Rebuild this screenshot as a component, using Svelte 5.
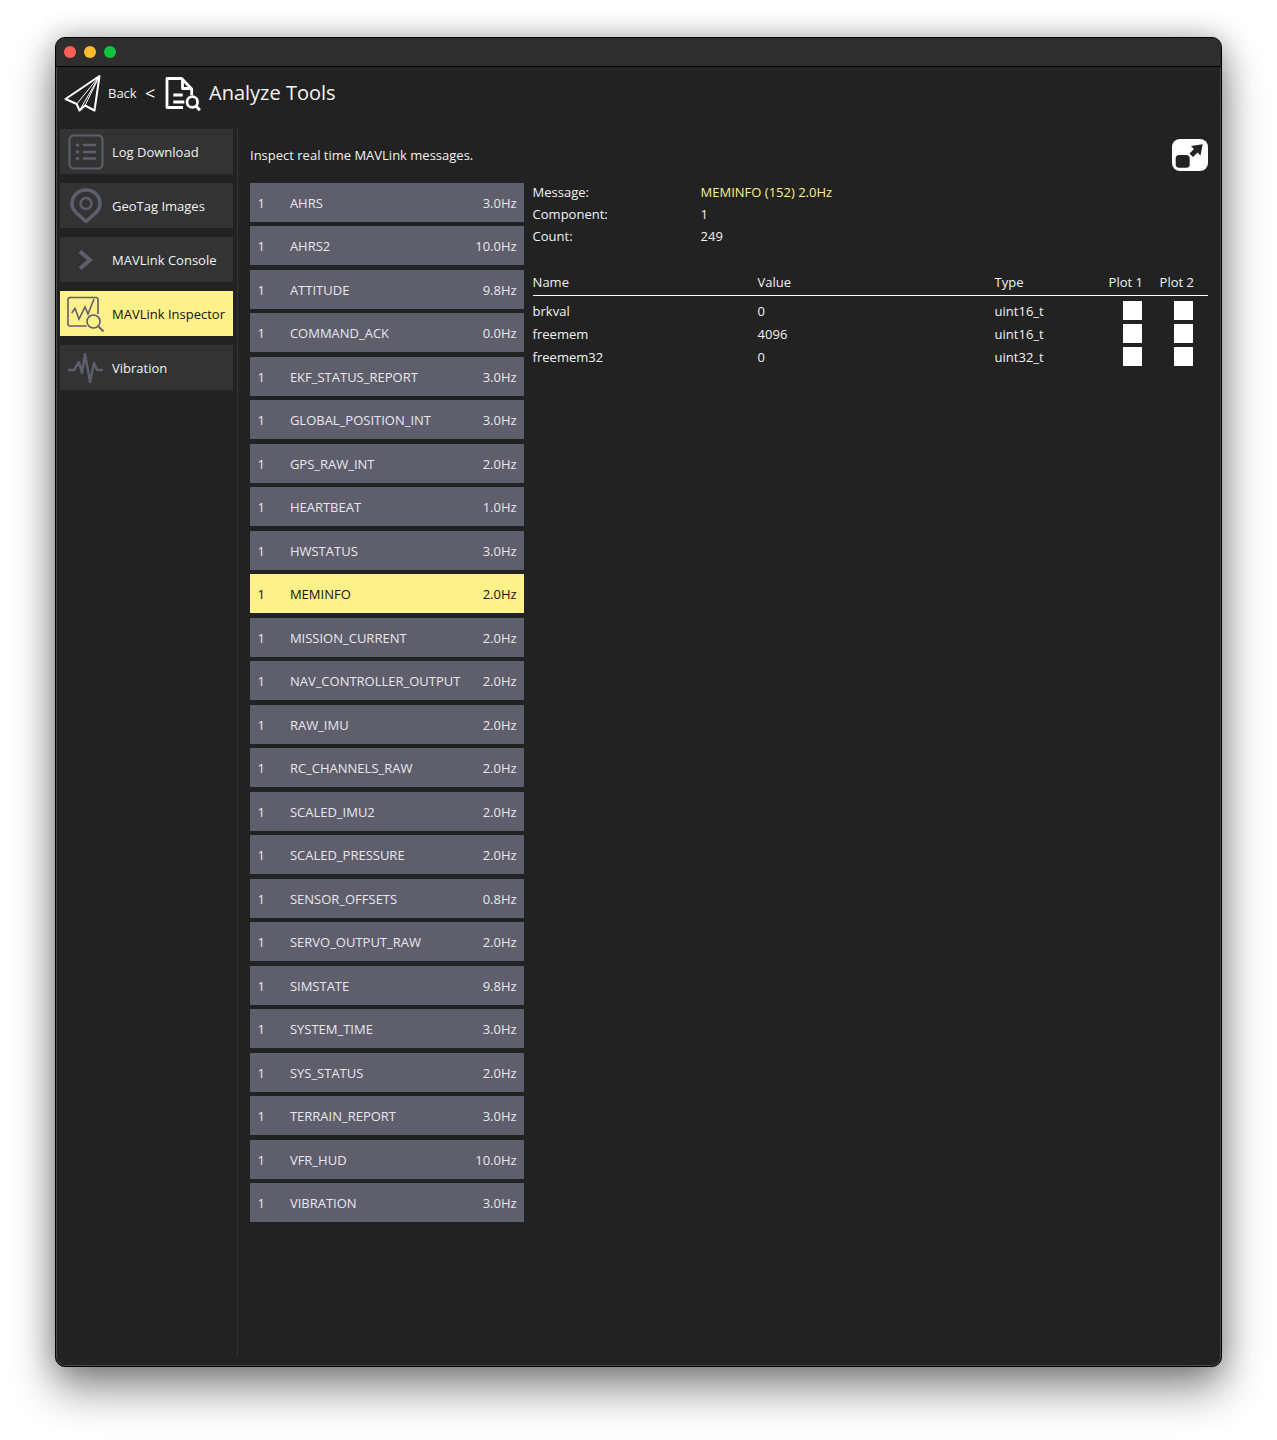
<script>
	const tools = [
		{ name: 'Log Download', icon: 'list' },
		{ name: 'GeoTag Images', icon: 'pin' },
		{ name: 'MAVLink Console', icon: 'chevron' },
		{ name: 'MAVLink Inspector', icon: 'inspect', active: true },
		{ name: 'Vibration', icon: 'wave' }
	];

	const messages = [
		['AHRS', '3.0Hz'],
		['AHRS2', '10.0Hz'],
		['ATTITUDE', '9.8Hz'],
		['COMMAND_ACK', '0.0Hz'],
		['EKF_STATUS_REPORT', '3.0Hz'],
		['GLOBAL_POSITION_INT', '3.0Hz'],
		['GPS_RAW_INT', '2.0Hz'],
		['HEARTBEAT', '1.0Hz'],
		['HWSTATUS', '3.0Hz'],
		['MEMINFO', '2.0Hz'],
		['MISSION_CURRENT', '2.0Hz'],
		['NAV_CONTROLLER_OUTPUT', '2.0Hz'],
		['RAW_IMU', '2.0Hz'],
		['RC_CHANNELS_RAW', '2.0Hz'],
		['SCALED_IMU2', '2.0Hz'],
		['SCALED_PRESSURE', '2.0Hz'],
		['SENSOR_OFFSETS', '0.8Hz'],
		['SERVO_OUTPUT_RAW', '2.0Hz'],
		['SIMSTATE', '9.8Hz'],
		['SYSTEM_TIME', '3.0Hz'],
		['SYS_STATUS', '2.0Hz'],
		['TERRAIN_REPORT', '3.0Hz'],
		['VFR_HUD', '10.0Hz'],
		['VIBRATION', '3.0Hz']
	];

	const fields = [
		['brkval', '0', 'uint16_t'],
		['freemem', '4096', 'uint16_t'],
		['freemem32', '0', 'uint32_t']
	];
</script>

<div class="window">
	<div class="titlebar">
		<span class="dot red"></span>
		<span class="dot yellow"></span>
		<span class="dot green"></span>
	</div>

	<header class="toolbar">
		<svg class="plane" viewBox="0 0 38 38" width="38" height="38" fill="none" stroke="#fff" stroke-width="2" stroke-linejoin="round">
			<path d="M35.500 1 1.500 24 12.700 29 15.500 35.500 21 30.500 30.500 35.500z" />
			<path d="M35.500 1 12.700 29M35.500 1 15.500 35.500M35.500 1 21 30.500" stroke-width="1" />
		</svg>
		<span class="back">Back</span>
		<span class="chevron">&lt;</span>
		<svg class="doc" viewBox="0 0 36 36" width="36" height="36" fill="none" stroke="#fff" stroke-width="2.800">
			<path d="M18 31.500H2V2.500h14.700l10 10.500v6" stroke-linejoin="round" />
			<path d="M17.500 3v9.500h8" stroke-linejoin="round" />
			<path d="M8.300 19h9.400M8.300 26h11" />
			<circle cx="27.300" cy="26" r="5.300" />
			<path d="M31 30l3.800 4.300" stroke-width="3" />
		</svg>
		<span class="heading">Analyze Tools</span>
	</header>

	<div class="body">
		<nav class="sidebar">
			{#each tools as tool}
				<div class="tool" class:active={tool.active}>
					<span class="tool-icon">
						{#if tool.icon === 'list'}
							<svg viewBox="0 0 36 36" width="36" height="36" fill="none" stroke="#5f5e6d" stroke-width="2">
								<rect x="1.500" y="1.500" width="33" height="33" rx="4" />
								<path d="M15 11h13M15 18h13M15 24.500h13" stroke-width="2.400" />
								<circle cx="9.500" cy="11" r="1.800" fill="#5f5e6d" stroke="none" />
								<circle cx="9.500" cy="18" r="1.800" fill="#5f5e6d" stroke="none" />
								<circle cx="9.500" cy="24.500" r="1.800" fill="#5f5e6d" stroke="none" />
							</svg>
						{:else if tool.icon === 'pin'}
							<svg viewBox="0 0 32 36" width="32" height="36" fill="none" stroke="#5f5e6d">
								<path d="M16 33.500 6 24.500C3.500 22 2 19 2 15.500 2 8 8 2 16 2s14 6 14 13.500c0 3.500-1.500 6.500-4 9z" stroke-width="3.500" stroke-linejoin="round" />
								<circle cx="16" cy="15.500" r="5.500" stroke-width="2.500" />
							</svg>
						{:else if tool.icon === 'chevron'}
							<svg viewBox="0 0 16 20" width="16" height="20" fill="none" stroke="#5f5e6d" stroke-width="4">
								<path d="M2 1.500 12 10 2 18.500" />
							</svg>
						{:else if tool.icon === 'inspect'}
							<svg viewBox="0 0 38 38" width="38" height="38" fill="none" stroke="#5f5e6d" stroke-width="1.600">
								<path d="M19.500 31H3a2 2 0 0 1-2-2V4.500a2 2 0 0 1 2-2h26a2 2 0 0 1 2 2V19" />
								<path d="M4.700 18 8 13.500 12 24 18 12l3 7 6-15" />
								<circle cx="26.500" cy="26.500" r="6.500" />
								<path d="M31.500 31.500l5 5" stroke-width="1.800" />
							</svg>
						{:else}
							<svg viewBox="0 0 38 30" width="38" height="30" fill="none" stroke="#5f5e6d" stroke-width="2.400" stroke-linejoin="round">
								<path d="M1 17h6l5-8 3 11 3-19 5 28 4-19 3 7h6" />
							</svg>
						{/if}
					</span>
					<span class="tool-name">{tool.name}</span>
				</div>
			{/each}
		</nav>

		<main class="content">
			<div class="intro">
				<p>Inspect real time MAVLink messages.</p>
				<button class="popout" aria-label="Pop out">
					<svg viewBox="0 0 36 32" width="36" height="32">
						<rect x="3.700" y="16" width="14" height="12.700" rx="3.500" fill="#222" />
						<path d="M30.700 5.300 28.500 16.500l-3-3-4.500 4.500-3.500-3.500 4.500-4.500-3-3z" fill="#222" />
					</svg>
				</button>
			</div>

			<div class="panes">
				<ul class="messages">
					{#each messages as [name, rate]}
						<li class="message" class:selected={name === 'MEMINFO'}>
							<span class="comp">1</span>
							<span class="msg-name">{name}</span>
							<span class="rate">{rate}</span>
						</li>
					{/each}
				</ul>

				<section class="detail">
					<dl class="summary">
						<dt>Message:</dt>
						<dd class="highlight">MEMINFO (152) 2.0Hz</dd>
						<dt>Component:</dt>
						<dd>1</dd>
						<dt>Count:</dt>
						<dd>249</dd>
					</dl>

					<div class="fields">
						<div class="head row">
							<span>Name</span>
							<span>Value</span>
							<span>Type</span>
							<span class="plot">Plot 1</span>
							<span class="plot">Plot 2</span>
						</div>
						{#each fields as [name, value, type]}
							<div class="row">
								<span>{name}</span>
								<span>{value}</span>
								<span>{type}</span>
								<span class="check"></span>
								<span class="check"></span>
							</div>
						{/each}
					</div>
				</section>
			</div>
		</main>
	</div>
</div>

<style>
	:global(body) {
		background: #fff;
		font-family: 'Open Sans', 'DejaVu Sans', sans-serif;
	}

	.window {
		box-sizing: border-box;
		width: 1167px;
		height: 1330px;
		margin: 37px 0 73px 55px;
		background: #222;
		border: 1px solid #000;
		border-radius: 10px;
		box-shadow:
			inset 0 0 0 1px #4a4a4a,
			0 22px 45px rgba(0, 0, 0, 0.45),
			0 0 28px rgba(0, 0, 0, 0.25);
		overflow: hidden;
		color: #fff;
		font-size: 13px;
		display: flex;
		flex-direction: column;
	}

	.titlebar {
		height: 29px;
		flex-shrink: 0;
		box-sizing: border-box;
		background: #2e2e2e;
		border-bottom: 1px solid #000;
		display: flex;
		align-items: center;
		gap: 8px;
		padding: 0 0 0 8px;
	}

	.dot {
		width: 12px;
		height: 12px;
		border-radius: 50%;
	}

	.red {
		background: #ff5f57;
	}

	.yellow {
		background: #febc2e;
	}

	.green {
		background: #12c33d;
	}

	.toolbar {
		height: 62px;
		box-sizing: border-box;
		flex-shrink: 0;
		display: flex;
		align-items: center;
		padding: 0 0 10px 8px;
	}

	.plane {
		margin: 2px 6px 0 0;
	}

	.back {
		font-size: 13px;
		color: #f2f2f2;
		width: 37px;
	}

	.chevron {
		font-size: 18px;
		width: 20px;
	}

	.doc {
		margin: 2px 8px 0 0;
	}

	.heading {
		font-size: 20px;
		color: #f4f4f4;
		margin-top: -2px;
	}

	.body {
		flex: 1;
		display: flex;
		padding: 0 0 9px 4px;
		min-height: 0;
	}

	.sidebar {
		width: 173px;
		display: flex;
		flex-direction: column;
		gap: 9px;
		padding-right: 4px;
		border-right: 1px solid #333;
		flex-shrink: 0;
	}

	.tool {
		height: 45px;
		background: #333;
		display: flex;
		align-items: center;
		color: #f2f2f2;
		flex-shrink: 0;
	}

	.tool.active {
		background: #fff18a;
		color: #111;
	}

	.tool-icon {
		width: 52px;
		display: flex;
		justify-content: center;
		flex-shrink: 0;
	}

	.tool-name {
		white-space: nowrap;
	}

	.content {
		flex: 1;
		padding: 0 13px 0 12px;
		min-width: 0;
	}

	.intro {
		box-sizing: border-box;
		display: flex;
		justify-content: space-between;
		align-items: center;
		height: 53.7px;
		padding-bottom: 2px;
	}

	.intro p {
		margin: 0;
		color: #f2f2f2;
	}

	.popout {
		width: 36px;
		height: 32px;
		padding: 0;
		border: none;
		background: #fff;
		border-radius: 8px;
		display: block;
	}

	.popout svg {
		display: block;
	}

	.panes {
		display: flex;
		gap: 8.6px;
	}

	.messages {
		list-style: none;
		margin: 0;
		padding: 0;
		width: 274px;
		flex-shrink: 0;
		display: flex;
		flex-direction: column;
		gap: 4.5px;
	}

	.message {
		box-sizing: border-box;
		height: 39px;
		background: #5f5e6d;
		display: flex;
		align-items: center;
		padding: 0.7px 7.4px 0 7.6px;
		color: #e8e8ec;
	}

	.message.selected {
		background: #fff18a;
		color: #111;
	}

	.comp {
		width: 32.3px;
	}

	.msg-name {
		flex: 1;
		white-space: nowrap;
	}

	.detail {
		flex: 1;
		min-width: 0;
	}

	.summary {
		display: grid;
		grid-template-columns: 168px 1fr;
		grid-auto-rows: 22px;
		align-items: center;
		margin: -1.7px 0 0;
		color: #f2f2f2;
	}

	.summary dt,
	.summary dd {
		margin: 0;
	}

	.highlight {
		color: #fff18a;
	}

	.fields {
		margin-top: 26px;
	}

	.row {
		display: grid;
		grid-template-columns: 225px 237px 114px 51px 48px;
		align-items: center;
		height: 23.2px;
		color: #f2f2f2;
	}

	.head {
		height: 23px;
		border-bottom: 1px solid #fff;
		margin-bottom: 3px;
		box-sizing: border-box;
		align-items: start;
	}

	.head span {
		line-height: 18px;
	}

	.plot {
		white-space: nowrap;
	}

	.check {
		width: 19px;
		height: 19px;
		background: #fff;
		margin-left: 14px;
	}
</style>
